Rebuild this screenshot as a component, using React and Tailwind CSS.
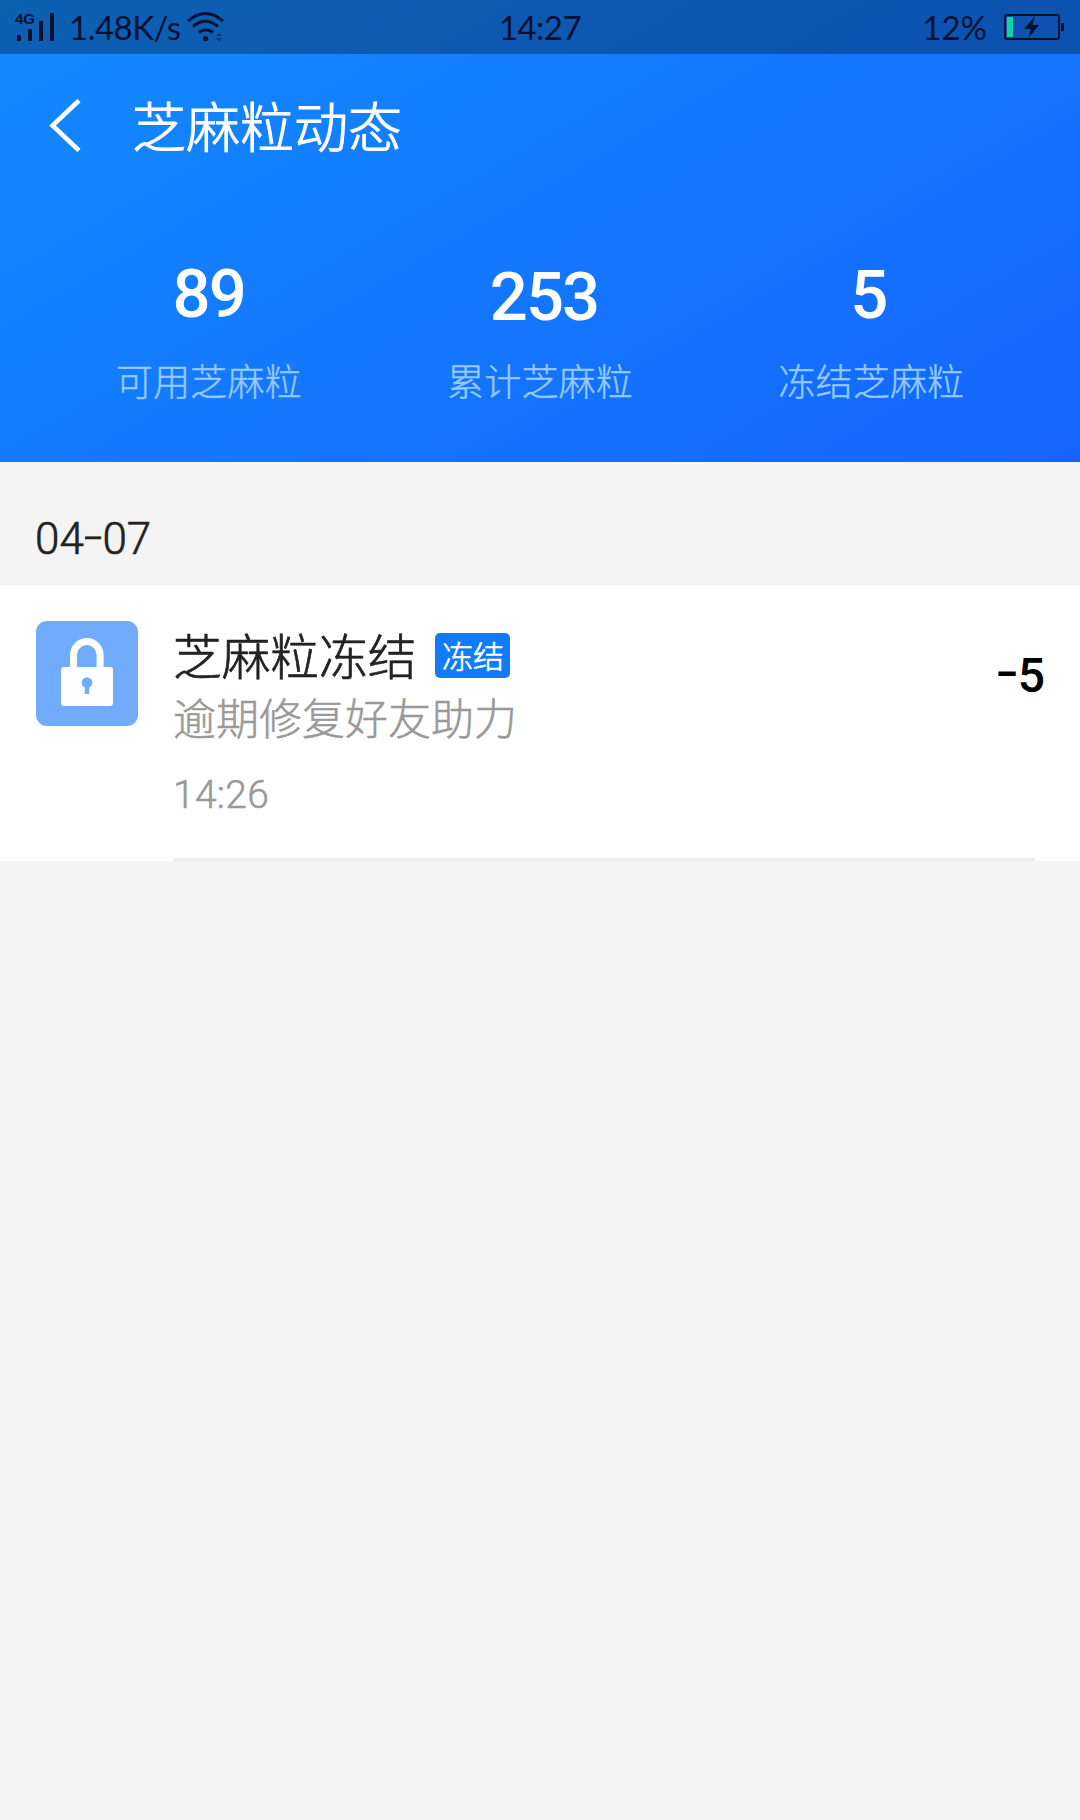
import React from 'react';

const stats = [
  { value: '89', label: '可用芝麻粒', numClass: 'pt-[1px] pl-0' },
  { value: '253', label: '累计芝麻粒', numClass: 'pt-[4px] pl-[8px]' },
  { value: '5', label: '冻结芝麻粒', numClass: 'pt-[2px] pr-[6px]' },
];

const Hyphen = ({ className }) => <span className={`relative inline-block ${className}`}>-</span>;

const StatusBar = () => (
  <div className="flex h-[54px] items-center bg-black/30 font-['Lato',sans-serif] text-[#04102f]">
    <div className="flex w-[360px] items-center">
      {/* signal */}
      <svg className="ml-[14px] w-[42px] h-[54px]" viewBox="14 0 42 54" fill="currentColor">
        <text x="15" y="24" fontSize="15" fontWeight="700" fontFamily="Liberation Sans, sans-serif">4G</text>
        <rect x="17" y="35" width="4" height="6" />
        <rect x="28" y="29" width="4" height="12" />
        <rect x="39" y="21" width="4" height="20" />
        <rect x="50" y="13" width="4" height="28" />
      </svg>
      <span className="ml-[13px] w-[114px] text-[33px] leading-[56px] tracking-[-0.5px] whitespace-nowrap">1.48K/s</span>
      {/* wifi */}
      <svg className="ml-[3px] w-[40px] h-[54px]" viewBox="186 0 40 54" fill="none" stroke="currentColor" strokeWidth="3">
        <path d="M188 21 Q205.500 6 223 21" />
        <path d="M193 26.500 Q205.500 16 218 26.500" />
        <path d="M199 32.500 Q205.500 27 213 32.500" />
        <circle cx="205.500" cy="38.500" r="2.600" fill="currentColor" stroke="none" />
        <path d="M216 36l3-3.500 3 3.500zM216 38l3 3.500 3-3.500z" fill="currentColor" stroke="none" opacity="0.5" />
      </svg>
    </div>
    <div className="w-[360px] text-center text-[33px] leading-[60px] tracking-[-0.5px]">14:27</div>
    <div className="flex w-[360px] items-center justify-end">
      <span className="text-[33px] leading-[54px]">12%</span>
      {/* battery */}
      <svg className="ml-[15px] mr-[14px] w-[64px] h-[54px]" viewBox="1002 0 64 54">
        <rect x="1005" y="15" width="54" height="24" rx="2" fill="none" stroke="currentColor" strokeWidth="2" />
        <rect x="1061" y="23" width="3" height="8" fill="currentColor" />
        <rect x="1007" y="17" width="6" height="20" fill="#14d3a0" />
        <path d="M1035 16 L1024 29 H1031 L1028.500 38 L1039 25 H1032.500 Z" fill="currentColor" />
      </svg>
    </div>
  </div>
);

const LockIcon = () => (
  <svg className="h-[105px] w-[102px] shrink-0 rounded-[11px] bg-[#70abfc]" viewBox="36 621 102 105">
    <path d="M73.500 670 V655 a13.300 13.500 0 0 1 26.600 0 V670" fill="none" stroke="#fff" strokeWidth="7" />
    <rect x="61" y="667" width="52" height="39" rx="3" fill="#fff" />
    <circle cx="87" cy="682.500" r="5.300" fill="#70abfc" />
    <path d="M87 684 V694" stroke="#70abfc" strokeWidth="4.500" />
  </svg>
);

const App = () => {
  return (
    <div className="min-h-[1820px] w-[1080px] bg-[#f4f4f4] font-['Roboto','Noto_Sans_CJK_SC',sans-serif]">
      <header className="h-[462px] bg-[linear-gradient(150deg,#128bff_0%,#1479fe_48%,#1465ff_100%)] text-white">
        <StatusBar />

        {/* Title bar */}
        <div className="flex h-[144px] items-center">
          <svg className="ml-[48px] h-[56px] w-[36px]" viewBox="48.500 97.500 36 56" fill="none" stroke="#fff" strokeWidth="4.500">
            <path d="M79.500 100 L53 125 L79.500 150" />
          </svg>
          <h1 className="ml-[48px] pt-[7px] text-[54px] leading-[54px] font-light [-webkit-text-stroke:1px]">芝麻粒动态</h1>
        </div>

        {/* Totals */}
        <div className="grid grid-cols-3 px-[43px] pt-[61px] text-center">
          {stats.map((s) => (
            <div key={s.label}>
              <div className={`h-[82px] text-[67px] leading-[68px] font-medium tracking-[-2px] ${s.numClass}`}>{s.value}</div>
              <div className="pt-[22px] text-[37.200px] leading-[40px] font-light text-[#96caff] [-webkit-text-stroke:0.4px]">{s.label}</div>
            </div>
          ))}
        </div>
      </header>

      <div className="h-[123px] pt-[54px] pl-[35px] text-[44px] leading-[46px] font-light text-[#222] [-webkit-text-stroke:0.6px]">
        04<Hyphen className="-top-[2px] mx-[3px] scale-x-150" />07
      </div>

      {/* Record */}
      <div className="flex h-[276px] bg-white pt-[36px] pl-[36px]">
        <LockIcon />
        <div className="ml-[36px] flex w-[861px] flex-col border-b-[3px] border-[#ebebeb]">
          <div className="flex">
            <div className="flex-1">
              <div className="flex items-start pt-[12px]">
                <span className="ml-[-1px] pt-[1px] text-[48.700px] leading-[50px] font-light text-[#222] [-webkit-text-stroke:0.7px]">芝麻粒冻结</span>
                <span className="ml-[19px] h-[45px] w-[75px] rounded-[5px] bg-[#127bf8] text-center text-[31px] leading-[50px] font-light text-white [-webkit-text-stroke:0.6px]">冻结</span>
              </div>
              <div className="ml-[-1px] pt-[13px] text-[43px] leading-[46px] font-light text-[#999] [-webkit-text-stroke:0.5px]">逾期修复好友助力</div>
              <div className="ml-[-1px] pt-[30px] text-[39px] leading-[44px] font-light tracking-[0.3px] text-[#999] [-webkit-text-stroke:0.5px]">14:26</div>
            </div>
            <div className="mr-[-10px] pt-[29px] text-[48px] leading-[52px] font-medium text-black">
              <Hyphen className="-top-[4px] mr-[2px] scale-x-140" />5
            </div>
          </div>
        </div>
      </div>
    </div>
  );
};

export default App;
